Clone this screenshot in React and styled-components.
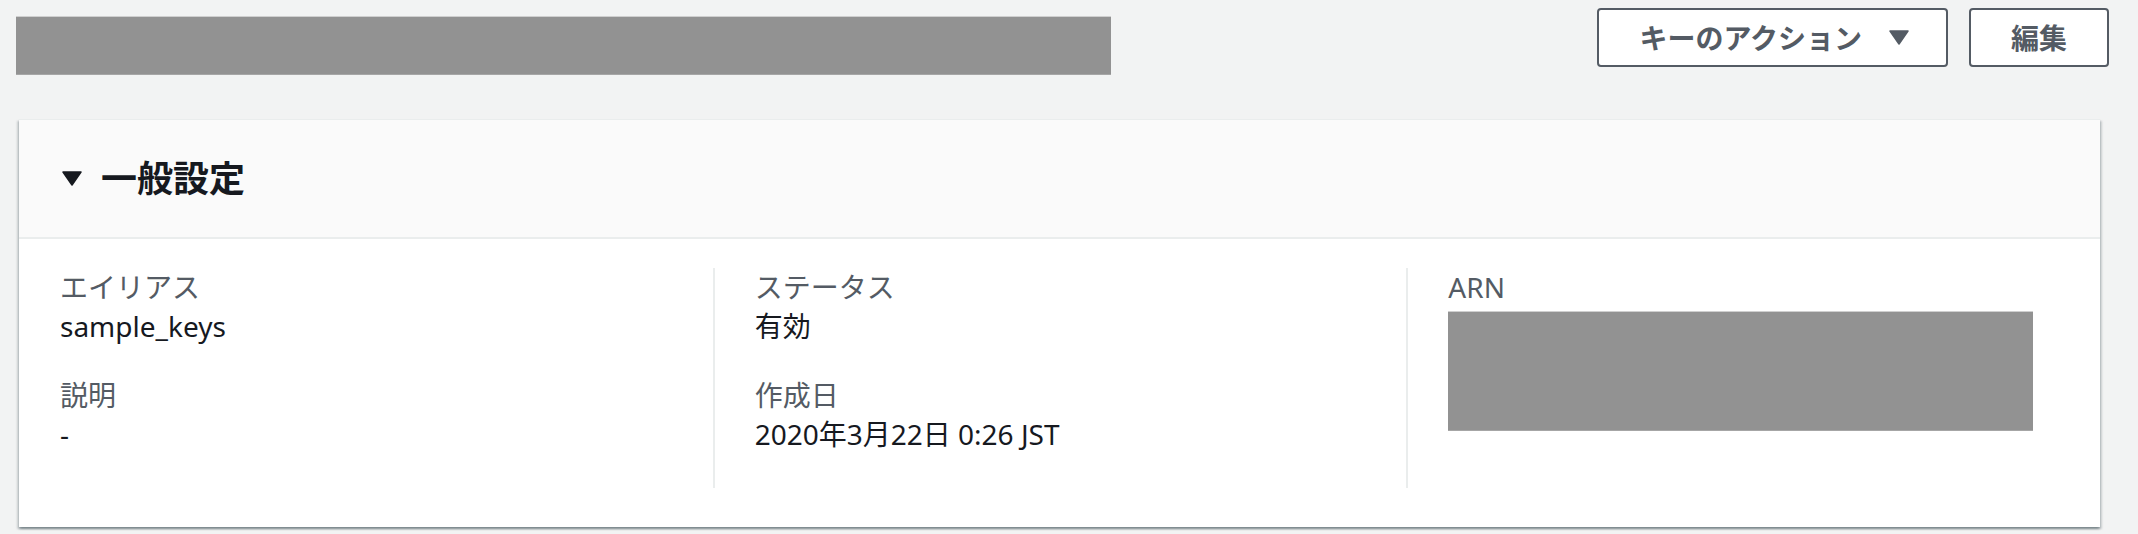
import React from "react";
import styled, { createGlobalStyle } from "styled-components";

const GlobalStyle = createGlobalStyle`
  html, body {
    margin: 0;
    padding: 0;
    background: #f2f3f3;
    font-family: "Noto Sans", "Noto Sans CJK JP", sans-serif;
    color: #16191f;
  }
  * { box-sizing: border-box; }
`;

const Page = styled.div`
  width: 2138px;
  min-height: 534px;
  background: #f2f3f3;
`;

const TopRow = styled.div`
  display: flex;
  justify-content: space-between;
  align-items: flex-start;
  padding: 8px 29px 0 16px;
`;

const Redacted = styled.div`
  width: ${(p) => p.$w}px;
  height: ${(p) => p.$h}px;
  margin-top: ${(p) => p.$mt || 0}px;
  background: #929292;
  border-top: 1px solid #cfcfcf;
  border-bottom: 1px solid #a6a6a6;
`;

const Actions = styled.div`
  display: flex;
  gap: 21px;
`;

const Button = styled.button`
  height: 59px;
  display: flex;
  align-items: center;
  gap: 27px;
  padding: 0 ${(p) => (p.$dropdown ? 37 : 40)}px 0 40px;
  border: 2px solid #545b64;
  border-radius: 4px;
  background: #ffffff;
  color: #545b64;
  font-family: "Noto Sans", "Noto Sans CJK JP", sans-serif;
  font-size: 28px;
  font-weight: 700;
  line-height: 40px;
  cursor: pointer;
`;

const Panel = styled.section`
  margin: 44px 38px 0 19px;
  background: #ffffff;
  border-top: 1px solid #eaeded;
  box-shadow: 0 2px 2px 0 rgba(0, 28, 36, 0.3),
    2px 2px 2px 0 rgba(0, 28, 36, 0.15),
    -2px 2px 2px 0 rgba(0, 28, 36, 0.15);
`;

const PanelHeader = styled.div`
  height: 119px;
  display: flex;
  align-items: center;
  gap: 19px;
  padding-left: 43px;
  background: #fafafa;
  border-bottom: 2px solid #eaeded;
`;

const Heading = styled.h2`
  margin: 0;
  font-size: 36px;
  font-weight: 700;
  line-height: 48px;
  color: #16191f;
`;

const PanelBody = styled.div`
  display: grid;
  grid-template-columns: repeat(3, 1fr);
  padding: 29px 0 39px;
`;

const Column = styled.div`
  padding: 0 40px 4px ${(p) => (p.$divider ? 40 : 41)}px;
  border-left: ${(p) => (p.$divider ? "2px solid #eaeded" : "none")};
`;

const Pair = styled.div`
  margin-bottom: 30px;
`;

const Label = styled.div`
  font-size: 28px;
  line-height: 38px;
  color: #545b64;
`;

const Value = styled.div`
  font-size: 28px;
  line-height: 40px;
  color: #16191f;
`;

const Caret = ({ color, w, h }) => (
  <svg width={w} height={h} viewBox="0 0 20 15" aria-hidden="true">
    <path d="M1 1 L19 1 L10 14 Z" fill={color} stroke={color} strokeWidth="1.5" strokeLinejoin="round" />
  </svg>
);

export default function App() {
  return (
    <Page>
      <GlobalStyle />
      <TopRow>
        <Redacted $w={1095} $h={59} $mt={8} />
        <Actions>
          <Button $dropdown>
            <span>キーのアクション</span>
            <Caret color="#545b64" w={20} h={15} />
          </Button>
          <Button>編集</Button>
        </Actions>
      </TopRow>
      <Panel>
        <PanelHeader>
          <Caret color="#16191f" w={20} h={15} />
          <Heading>一般設定</Heading>
        </PanelHeader>
        <PanelBody>
          <Column>
            <Pair>
              <Label>エイリアス</Label>
              <Value>sample_keys</Value>
            </Pair>
            <Pair>
              <Label>説明</Label>
              <Value>-</Value>
            </Pair>
          </Column>
          <Column $divider>
            <Pair>
              <Label>ステータス</Label>
              <Value>有効</Value>
            </Pair>
            <Pair>
              <Label>作成日</Label>
              <Value>2020年3月22日 0:26 JST</Value>
            </Pair>
          </Column>
          <Column $divider>
            <Pair>
              <Label>ARN</Label>
              <Redacted $w={585} $h={120} $mt={5} />
            </Pair>
          </Column>
        </PanelBody>
      </Panel>
    </Page>
  );
}
